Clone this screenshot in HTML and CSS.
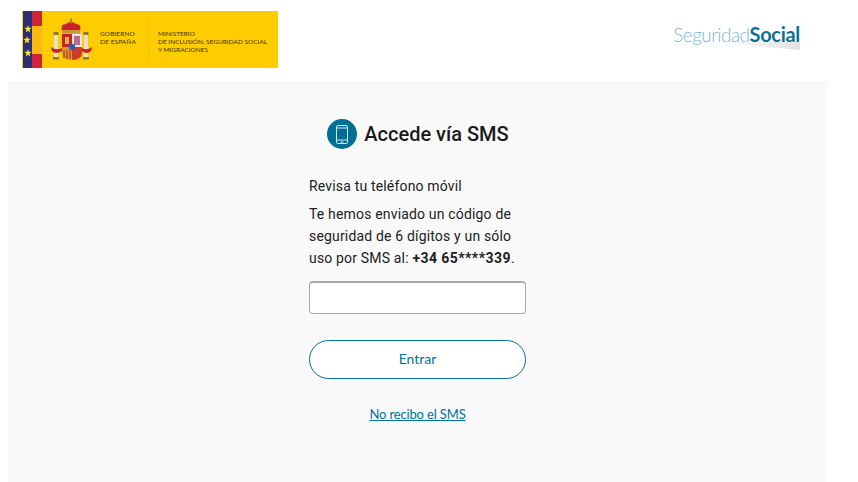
FILE: index.html
```html
<!DOCTYPE html>
<html lang="es">

<head>
	<meta charset="UTF-8">
	<meta name="viewport" content="width=device-width, initial-scale=1.0">
	<title>Accede vía SMS</title>
	<link rel="stylesheet" href="styles.css">
</head>

<body>
	<header class="header">
		<div class="gov-logo">
			<div class="gov-flag">
				<div class="gov-flag-blue">
					<svg width="9" height="57" viewBox="0 0 9 57">
						<polygon fill="#ffe23a" points="5,14 5.900,16.800 8.800,16.800 6.500,18.600 7.300,21.400 5,19.700 2.700,21.400 3.500,18.600 1.200,16.800 4.100,16.800"/>
						<polygon fill="#ffe23a" points="4,25 4.900,27.800 7.800,27.800 5.500,29.600 6.300,32.400 4,30.700 1.700,32.400 2.500,29.600 0.200,27.800 3.100,27.800"/>
						<polygon fill="#ffe23a" points="5,38 5.900,40.800 8.800,40.800 6.500,42.600 7.300,45.400 5,43.700 2.700,45.400 3.500,42.600 1.200,40.800 4.100,40.800"/>
					</svg>
				</div>
				<div class="gov-flag-red">
					<div class="gov-flag-gold"></div>
				</div>
			</div>
			<svg class="gov-shield" width="41" height="44" viewBox="0 0 41 44">
				<!-- columns -->
				<rect x="3" y="15" width="4" height="26" fill="#e6e0cf"/>
				<rect x="33" y="15" width="4" height="26" fill="#e6e0cf"/>
				<rect x="2.500" y="14" width="5" height="3" fill="#8f7a35"/>
				<rect x="32.500" y="14" width="5" height="3" fill="#8f7a35"/>
				<rect x="2" y="39" width="6" height="2.500" fill="#8f7a35"/>
				<rect x="32" y="39" width="6" height="2.500" fill="#8f7a35"/>
				<!-- crown -->
				<path d="M11 13 Q9 6 15 6 Q17 4 20 4 Q23 4 25 6 Q31 6 29 13Z" fill="#c8202c"/>
				<rect x="11" y="12" width="18" height="3.500" fill="#c9982c"/>
				<rect x="19" y="0.500" width="2" height="5" fill="#a9842c"/>
				<!-- shield -->
				<rect x="11" y="16" width="10" height="13" fill="#c8202c"/>
				<rect x="21" y="16" width="10" height="13" fill="#eee6e6"/>
				<path d="M11 29 H21 V42 Q11 42 11 35Z" fill="#d99a2c"/>
				<path d="M21 29 H31 V35 Q31 42 21 42Z" fill="#cc3a2a"/>
				<path d="M13 32 V40 M16 32 V41 M19 32 V41" stroke="#b8302a" stroke-width="1.200"/>
				<rect x="14" y="19" width="4" height="7" fill="#e3b13c"/>
				<path d="M23 18 H29 V27 H23Z" fill="#bb6a8a"/>
				<circle cx="21" cy="29" r="3.200" fill="#2a5fa8"/>
				<!-- ribbons -->
				<path d="M0 29 Q5 33 11 30 V33 Q5 37 1 33Z" fill="#c8202c"/>
				<path d="M41 29 Q36 33 31 30 V33 Q36 37 40 33Z" fill="#c8202c"/>
			</svg>
			<div class="gov-name">GOBIERNO<br>DE ESPAÑA</div>
			<div class="gov-ministry">MINISTERIO<br>DE INCLUSIÓN, SEGURIDAD SOCIAL<br>Y MIGRACIONES</div>
		</div>
		<div class="ss-logo">
			<span class="ss-light">Seguridad</span><span class="ss-bold">Social</span>
			<svg class="ss-swoosh" width="90" height="8" viewBox="0 0 90 8">
				<defs>
					<linearGradient id="swoosh-fade">
						<stop offset="0" stop-color="#ffffff"/>
						<stop offset="1" stop-color="#e2e2e2"/>
					</linearGradient>
				</defs>
				<polygon points="0,0 90,0 90,8" fill="url(#swoosh-fade)"/>
			</svg>
		</div>
	</header>

	<main class="main">
		<h1 class="title">
			<span class="title-icon">
				<svg width="12" height="19" viewBox="0 0 12 19" fill="none" stroke="#d5e6ee" stroke-width="1">
					<rect x="0.500" y="0.500" width="11" height="18" rx="1.500"/>
					<path d="M0.500 3 H11.500 M0.500 15 H11.500 M4.500 17 H7.500"/>
				</svg>
			</span>
			Accede vía SMS
		</h1>
		<div class="form">
			<p class="lead">Revisa tu teléfono móvil</p>
			<p class="text">Te hemos enviado un código de seguridad de 6 dígitos y un sólo uso por SMS al: <b class="phone">+34 65****339</b>.</p>
			<input class="code-input" type="text">
			<button class="btn" type="button">Entrar</button>
			<a class="link" href="#">No recibo el SMS</a>
		</div>
	</main>
</body>

</html>
```

FILE: styles.css
```css
body
{
	margin: 0;
	background-color: #ffffff;
	color: #212121;
	font-family: Roboto, Arial, sans-serif;
	height: 482px;
	overflow: hidden;
}

.header
{
	display: flex;
	justify-content: space-between;
	height: 81px;
	padding: 11px 58px 0 22px;
	box-sizing: border-box;
}

.gov-logo
{
	display: flex;
	align-items: center;
	width: 256px;
	height: 57px;
	background-color: #ffcc00;
	color: #3d320a;
	font-family: Lato, sans-serif;
	font-size: 6.500px;
	line-height: 8px;
}

.gov-flag
{
	display: flex;
	height: 100%;
}

.gov-flag-blue
{
	width: 9px;
	margin-left: 1px;
	background-color: #2b2f78;
}

.gov-flag-blue svg
{
	display: block;
}

.gov-flag-red
{
	display: flex;
	align-items: center;
	width: 10px;
	background-color: #cf2338;
}

.gov-flag-gold
{
	width: 100%;
	height: 28px;
	background-color: #fdb913;
}

.gov-shield
{
	margin-left: 9px;
}

.gov-name
{
	margin-left: 8px;
	margin-bottom: 4px;
	width: 48px;
	letter-spacing: 0.1px;
	white-space: nowrap;
}

.gov-ministry
{
	padding-left: 9px;
	border-left: 1px solid #f2bc10;
	height: 38px;
	padding-top: 9px;
	box-sizing: border-box;
	white-space: nowrap;
}

.ss-logo
{
	position: relative;
	height: 38px;
	padding-top: 8px;
	font-family: Lato, sans-serif;
	font-size: 19px;
	line-height: 30px;
}

.ss-light
{
	color: #7fb6cd;
	font-weight: 300;
	letter-spacing: -0.55px;
}

.ss-bold
{
	color: #0f7096;
	font-weight: 700;
	font-size: 20px;
	letter-spacing: -0.3px;
}

.ss-swoosh
{
	position: absolute;
	right: 0;
	top: 31px;
}

.main
{
	display: flex;
	flex-direction: column;
	align-items: center;
	width: 819px;
	height: 401px;
	margin-left: 8px;
	padding-top: 38px;
	box-sizing: border-box;
	background-color: #f9f9f9;
}

.title
{
	display: flex;
	align-items: center;
	gap: 7px;
	margin: 0 0 26px 1px;
	font-size: 20px;
	font-weight: 500;
	line-height: 30px;
	color: #1a1a1a;
}

.title-icon
{
	display: flex;
	align-items: center;
	justify-content: center;
	width: 30px;
	height: 30px;
	border-radius: 50%;
	background-color: #006f94;
}

.form
{
	display: flex;
	flex-direction: column;
	width: 217px;
	font-size: 14px;
	line-height: 22px;
	letter-spacing: 0.17px;
}

.lead
{
	margin: 0 0 6px;
}

.text
{
	margin: 0 0 12px;
}

.phone
{
	letter-spacing: 0.44px;
}

.code-input
{
	height: 33px;
	padding: 0 8px;
	box-sizing: border-box;
	background-color: #ffffff;
	border: 1px solid #aaaaaa;
	border-top-width: 2px;
	border-radius: 4px;
}

.btn
{
	height: 39px;
	margin-top: 26px;
	padding-bottom: 3px;
	background-color: #ffffff;
	border: 1px solid #00739a;
	border-radius: 20px;
	color: #00739a;
	font-family: Lato, sans-serif;
	font-size: 14px;
}

.link
{
	margin-top: 25px;
	text-align: center;
	color: #00739a;
	font-family: Lato, sans-serif;
	font-size: 13px;
	letter-spacing: -0.15px;
	line-height: 20px;
}
```
